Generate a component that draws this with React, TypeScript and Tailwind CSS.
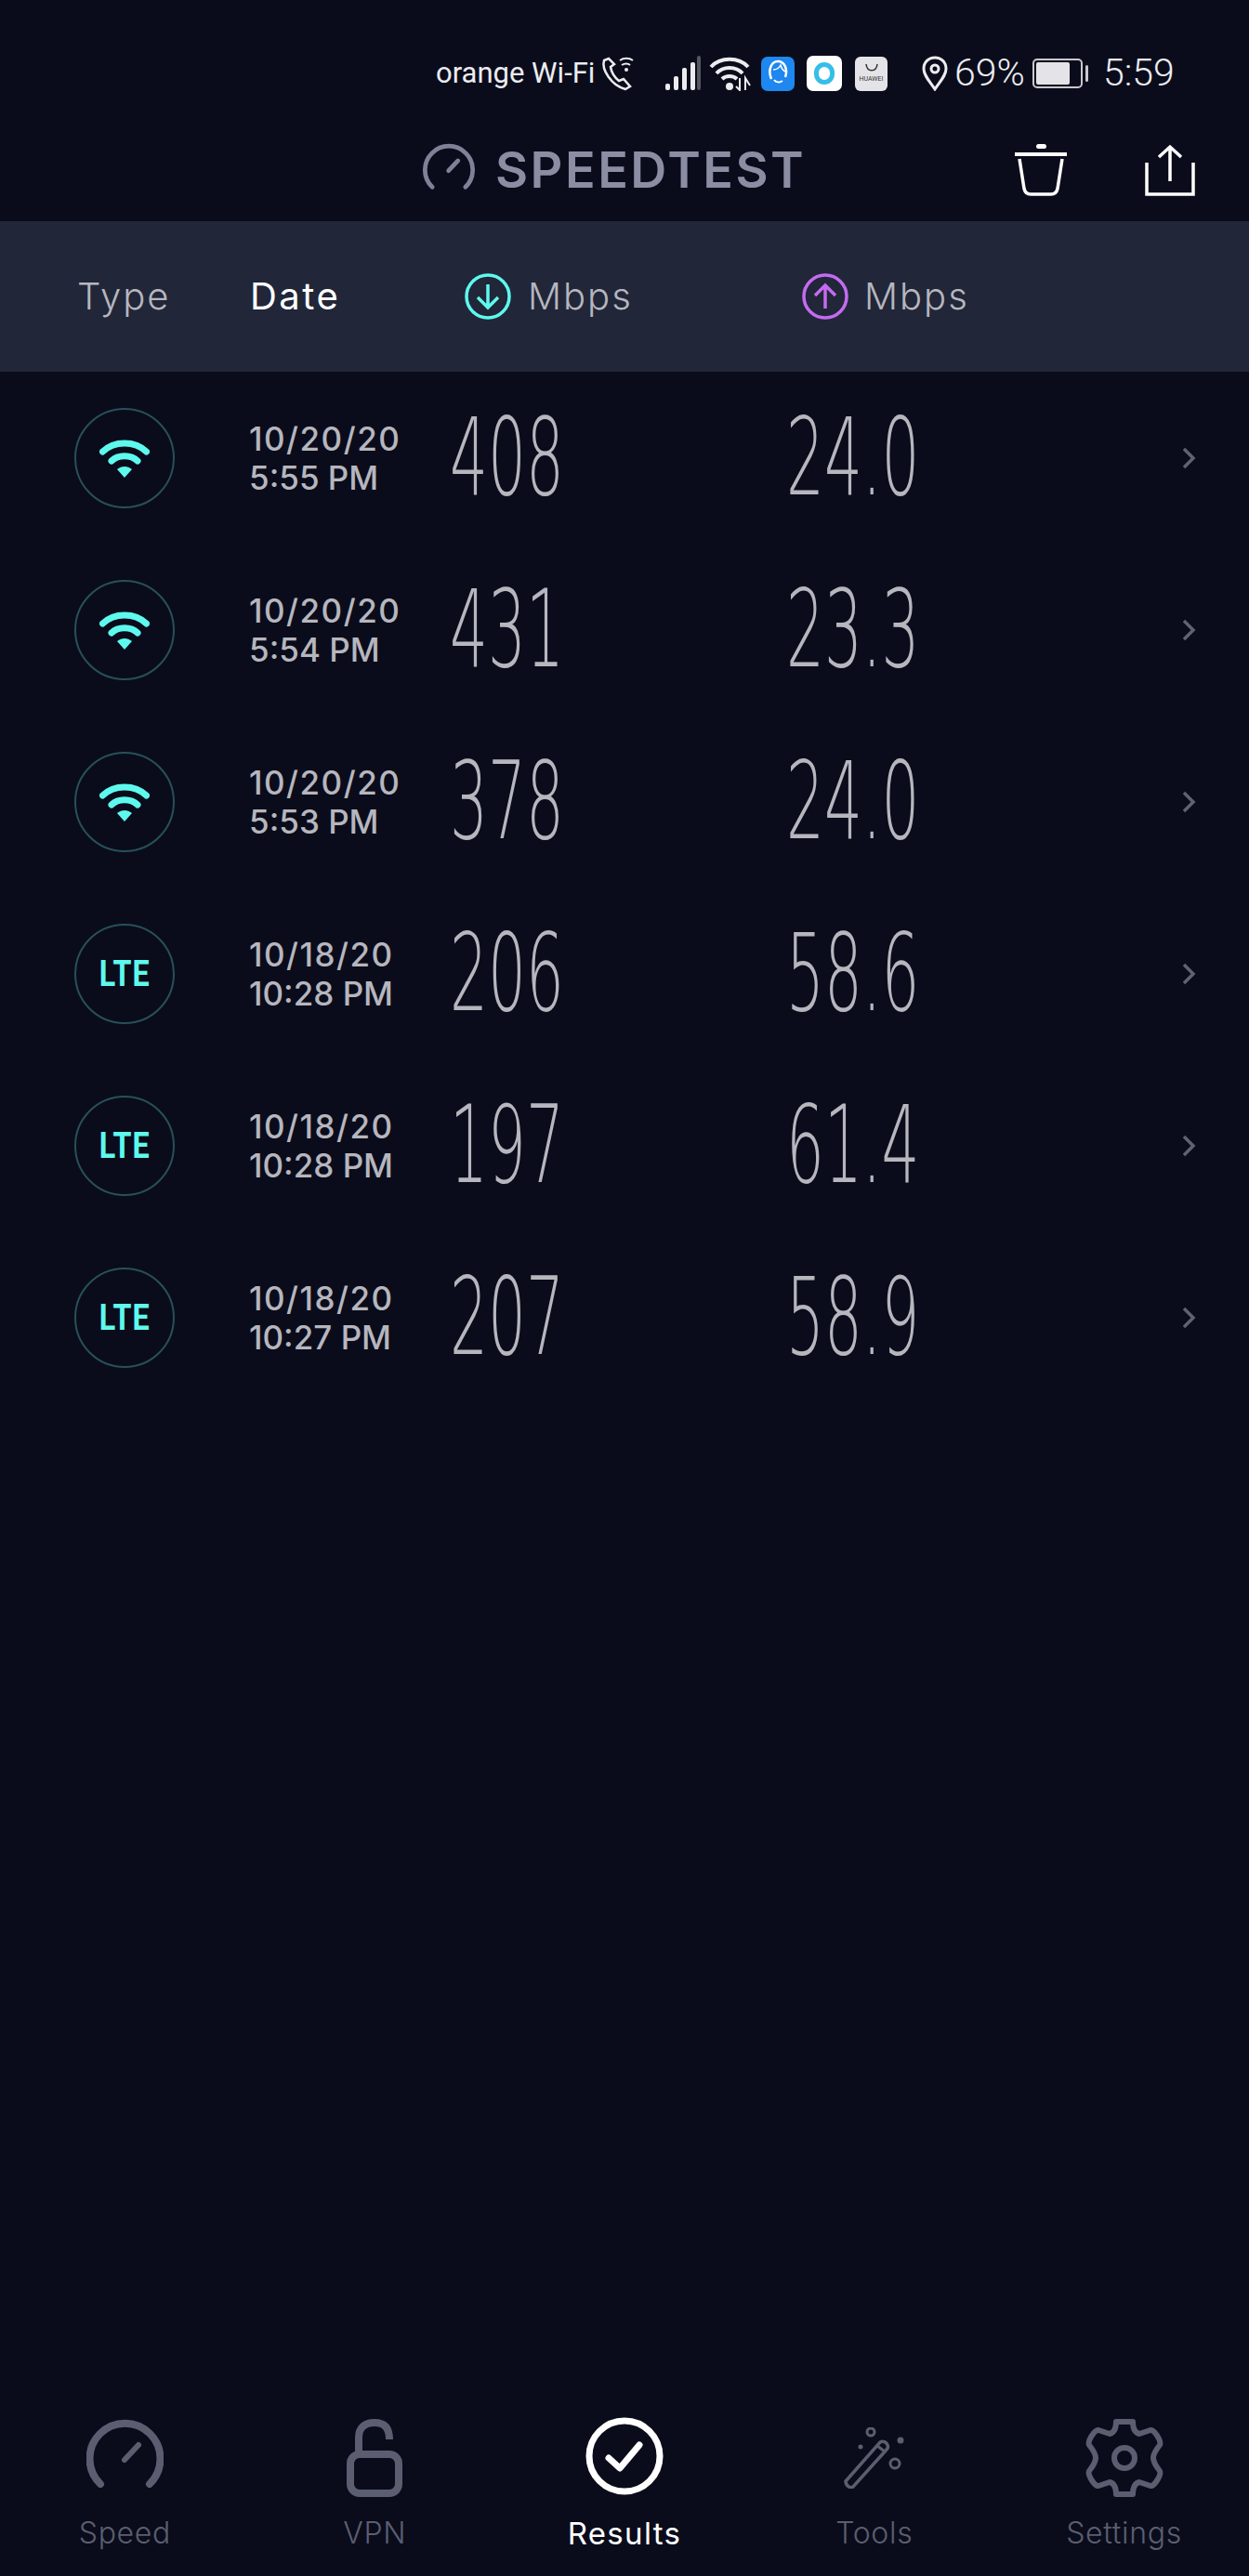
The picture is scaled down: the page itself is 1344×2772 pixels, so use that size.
import React from "react";

const rows = [
  { type: "wifi", date: "10/20/20", time: "5:55 PM", down: "408", up: "24.0" },
  { type: "wifi", date: "10/20/20", time: "5:54 PM", down: "431", up: "23.3" },
  { type: "wifi", date: "10/20/20", time: "5:53 PM", down: "378", up: "24.0" },
  { type: "lte", date: "10/18/20", time: "10:28 PM", down: "206", up: "58.6" },
  { type: "lte", date: "10/18/20", time: "10:28 PM", down: "197", up: "61.4" },
  { type: "lte", date: "10/18/20", time: "10:27 PM", down: "207", up: "58.9" },
];

const WifiIcon = () => (
  <svg width="54" height="42" viewBox="0 0 54 42" fill="none">
    <path d="M3.5 14 C16 2 38 2 50.5 14" stroke="#5ef9ee" strokeWidth="7" strokeLinecap="round" />
    <path d="M13 24 C20 17 34 17 41 24" stroke="#5ef9ee" strokeWidth="7" strokeLinecap="round" />
    <path d="M19 33 C24 29 30 29 35 33 L27 42 Z" fill="#5ef9ee" />
  </svg>
);

const Gauge = ({ color, w, h, sw, needle, className }: { color: string; w: number; h: number; sw: number; needle: number; className?: string }) => (
  <svg width={w} height={h} viewBox="0 0 83 74" fill="none" className={className}>
    <path d="M15 70 A38 38 0 1 1 68 70" stroke={color} strokeWidth={sw} strokeLinecap="round" />
    <path d="M41 44 L56 28" stroke={color} strokeWidth={needle} strokeLinecap="round" />
  </svg>
);

const Row = ({ r }: { r: (typeof rows)[number] }) => (
  <div className="flex h-[185px] items-center pl-[80px]">
    <div className="flex h-[108px] w-[108px] shrink-0 items-center justify-center rounded-full border-2 border-[#28505a]">
      {r.type === "wifi" ? (
        <WifiIcon />
      ) : (
        <span className="inline-block origin-center scale-x-[0.85] font-['Roboto'] text-[38px] font-bold leading-none tracking-[1px] text-[#5ef9ee]">
          LTE
        </span>
      )}
    </div>
    <div className="ml-[80px] w-[219px] shrink-0 text-[35px] font-medium leading-[42px] text-[#b6b6be]">
      <div className="tracking-[1.5px]">{r.date}</div>
      <div>{r.time}</div>
    </div>
    <div className="w-[362px] shrink-0">
      <span className="-ml-[3px] inline-block origin-left scale-x-[0.56] font-['DejaVu_Sans'] text-[115px] font-extralight leading-none text-[#b6b6be]">
        {r.down}
      </span>
    </div>
    <div className="w-[300px] shrink-0">
      <span className="-ml-[3px] inline-block origin-left scale-x-[0.56] font-['DejaVu_Sans'] text-[115px] font-extralight leading-none text-[#b6b6be]">
        {r.up}
      </span>
    </div>
    <svg width="16" height="30" viewBox="0 0 16 30" fill="none" className="ml-[122px]">
      <path d="M3 5 L13 15 L3 25" stroke="#5f6272" strokeWidth="3.5" />
    </svg>
  </div>
);

const NavItem = ({ label, active, children }: { label: string; active?: boolean; children: React.ReactNode }) => (
  <div className="flex flex-col items-center">
    <div className="flex h-[90px] items-center justify-center">{children}</div>
    <span className={`mt-[16px] leading-[40px] ${active ? "text-[33px] tracking-[1.3px] text-white" : "text-[32px] font-light tracking-[0.7px] text-[#5b5e70]"}`}>{label}</span>
  </div>
);

export default function App() {
  return (
    <div className="flex h-[2772px] w-[1344px] flex-col overflow-hidden bg-[#0a0c1b] font-['Inter'] sans-serif">
      {/* status bar */}
      <div className="flex h-[130px] items-start pl-[469px] pt-[57px] text-[#ececf0]">
        <div className="flex h-[44px] items-center">
          <span className="w-[172px] font-['Roboto'] text-[31px] whitespace-nowrap">orange Wi-Fi</span>
          <svg width="40" height="40" viewBox="0 0 40 40" fill="none" className="ml-[4px]">
            <path d="M5 6 C2 16 13 33 28 37 L33 34 L26 26 L21 28 C16 24 13 19 12 13 L16 10 L10 4 Z" stroke="#ececf0" strokeWidth="2.5" />
            <path d="M22 6 C26 3 32 3 36 6 M24 11 C27 9 31 9 33 11" stroke="#ececf0" strokeWidth="2" />
            <circle cx="29" cy="16" r="2" fill="#ececf0" />
          </svg>
          <svg width="40" height="38" viewBox="0 0 40 38" className="ml-[30px]">
            <rect x="1" y="30" width="5" height="7" rx="2" fill="#ececf0" />
            <rect x="10" y="22" width="5" height="15" rx="2" fill="#ececf0" />
            <rect x="19" y="13" width="5" height="24" rx="2" fill="#ececf0" />
            <rect x="28" y="7" width="5" height="30" rx="2" fill="#ececf0" />
            <rect x="35" y="0" width="4" height="37" rx="2" fill="#55565f" />
          </svg>
          <svg width="46" height="38" viewBox="0 0 46 38" fill="none" className="ml-[8px]">
            <path d="M2 12 C12 1 32 1 42 12 M8 19 C15 11 29 11 36 19 M14 25 C18 21 26 21 30 25" stroke="#ececf0" strokeWidth="4" />
            <circle cx="22" cy="33" r="4" fill="#ececf0" />
            <path d="M33 24 V37 L29 33 M39 37 V24 L44 32" stroke="#ececf0" strokeWidth="2" />
          </svg>
          <div className="ml-[10px] flex h-[37px] w-[36px] items-center justify-center rounded-[7px] bg-[#1e87f0]">
            <svg width="28" height="32" viewBox="0 0 28 32" fill="none">
              <path d="M7 22 C3 12 7 3 14 3 C21 3 25 11 22 20" stroke="#fff" strokeWidth="2.5" />
              <path d="M9 12 C13 12 16 9 17 7 C18 11 20 13 22 14" stroke="#fff" strokeWidth="1.5" />
              <path d="M10 23 C12 26 16 26 19 24" stroke="#fff" strokeWidth="2" />
            </svg>
          </div>
          <div className="ml-[13px] flex h-[38px] w-[38px] items-center justify-center rounded-[7px] bg-white">
            <div className="h-[24px] w-[22px] rounded-full border-[5px] border-[#35bfe8]" />
          </div>
          <div className="ml-[14px] flex h-[37px] w-[35px] flex-col items-center justify-center rounded-[6px] bg-[#e4e4e8]">
            <svg width="16" height="10" viewBox="0 0 16 10" fill="none">
              <path d="M2 0 C3 9 13 9 14 0" stroke="#333" strokeWidth="1.5" />
            </svg>
            <span className="mt-[2px] font-['Roboto'] text-[7px] leading-[8px] text-[#333]">HUAWEI</span>
          </div>
          <svg width="30" height="38" viewBox="0 0 30 38" fill="none" className="ml-[36px]">
            <path d="M15 36 C9 27 3 21 3 14 C3 7 8 2 15 2 C22 2 27 7 27 14 C27 21 21 27 15 36 Z" stroke="#ececf0" strokeWidth="3" />
            <circle cx="15" cy="14" r="4" stroke="#ececf0" strokeWidth="3" />
          </svg>
          <span className="ml-[6px] w-[78px] font-['Roboto'] text-[41px] font-light">69%</span>
          <div className="ml-[6px] flex items-center">
            <div className="flex h-[32px] w-[54px] items-center rounded-[5px] border-2 border-[#c8c8ce] p-[2px]">
              <div className="h-full w-[36px] rounded-[2px] bg-[#e4e4e8]" />
            </div>
            <div className="ml-[3px] h-[18px] w-[3px] rounded-full bg-[#c8c8ce]" />
          </div>
          <span className="ml-[16px] font-['Roboto'] text-[41px] font-light">5:59</span>
        </div>
      </div>

      {/* title bar */}
      <div className="mb-[2px] flex h-[106px] items-center pl-[454px]">
        <Gauge color="#7f8196" w={58} h={50} sw={7} needle={7} className="mb-[9px]" />
        <span className="ml-[21px] w-[333px] whitespace-nowrap text-[54px] font-semibold leading-none tracking-[2.5px] text-[#8b8da3]">SPEEDTEST</span>
        <svg width="56" height="56" viewBox="0 0 56 56" fill="none" className="ml-[226px]">
          <path d="M0 11 H56" stroke="#fff" strokeWidth="4" />
          <rect x="23" y="0" width="11" height="5" rx="2.5" fill="#fff" />
          <path d="M5 16 L10 48 C11 52 13 54 17 54 H39 C43 54 45 52 46 48 L51 16" stroke="#fff" strokeWidth="3.5" />
        </svg>
        <svg width="54" height="56" viewBox="0 0 54 56" fill="none" className="ml-[84px]">
          <path d="M27 40 V3 M15 14 L27 3 L39 14" stroke="#fff" strokeWidth="3.5" />
          <path d="M2 20 V54 H52 V20" stroke="#fff" strokeWidth="3.5" />
        </svg>
      </div>

      {/* column headers */}
      <div className="flex h-[162px] items-center bg-[#212639] pl-[83px] text-[40px] font-light tracking-[2px]">
        <span className="w-[186px] text-[#b6b6be]">Type</span>
        <span className="w-[231px] font-normal tracking-[2.5px] text-white">Date</span>
        <svg width="50" height="50" viewBox="0 0 50 50" fill="none">
          <circle cx="25" cy="25" r="23" stroke="#5ef9ee" strokeWidth="3.5" />
          <path d="M25 12 V37 M14 26 L25 37 L36 26" stroke="#5ef9ee" strokeWidth="3.5" />
        </svg>
        <span className="ml-[18px] w-[295px] text-[#b6b6be]">Mbps</span>
        <svg width="50" height="50" viewBox="0 0 50 50" fill="none">
          <circle cx="25" cy="25" r="23" stroke="#c56bf0" strokeWidth="3.5" />
          <path d="M25 38 V13 M14 24 L25 13 L36 24" stroke="#c56bf0" strokeWidth="3.5" />
        </svg>
        <span className="ml-[17px] text-[#b6b6be]">Mbps</span>
      </div>

      {/* results */}
      <div className="flex-1">
        {rows.map((r, i) => (
          <Row key={i} r={r} />
        ))}
      </div>

      {/* bottom nav */}
      <div className="grid h-[172px] grid-cols-5">
        <NavItem label="Speed">
          <Gauge color="#5b5e70" w={83} h={74} sw={8} needle={6} className="mb-[10px]" />
        </NavItem>
        <NavItem label="VPN">
          <svg width="60" height="84" viewBox="0 0 60 84" fill="none">
            <path d="M13 35 V20 C13 10 19 4 30 4 C41 4 46 10 46 22" stroke="#5b5e70" strokeWidth="8" />
            <rect x="4" y="38" width="52" height="42" rx="10" stroke="#5b5e70" strokeWidth="8" />
          </svg>
        </NavItem>
        <NavItem label="Results" active>
          <svg width="84" height="84" viewBox="0 0 84 84" fill="none" className="mb-[4px]">
            <circle cx="42" cy="42" r="38" stroke="#fff" strokeWidth="7" />
            <path d="M25 44 L37 55 L58 30" stroke="#fff" strokeWidth="7" strokeLinecap="round" strokeLinejoin="round" />
          </svg>
        </NavItem>
        <NavItem label="Tools">
          <svg width="68" height="66" viewBox="0 0 68 66" fill="none">
            <path d="M3 58 L40 16 C43 14 47 16 48 19 C49 21 48 23 47 24 L11 64 C8 66 3 63 3 58 Z" stroke="#5b5e70" strokeWidth="3.5" />
            <path d="M37 20 L45 26" stroke="#5b5e70" strokeWidth="3" />
            <circle cx="30" cy="5" r="4" stroke="#5b5e70" strokeWidth="3" />
            <circle cx="56" cy="39" r="5" stroke="#5b5e70" strokeWidth="3" />
            <circle cx="62" cy="14" r="3.5" fill="#5b5e70" />
            <circle cx="19" cy="21" r="2.5" fill="#5b5e70" />
          </svg>
        </NavItem>
        <NavItem label="Settings">
          <svg width="84" height="84" viewBox="0 0 84 84" fill="none">
            <path d="M33 3 H51 C51 12 54 15 58 16 L70 12 C74 11 82 24 80 28 C76 33 73 37 73 42 C73 47 76 51 80 56 C82 60 74 73 70 72 L58 68 C54 69 51 72 51 81 H33 C33 72 30 69 26 68 L14 72 C10 73 2 60 4 56 C8 51 11 47 11 42 C11 37 8 33 4 28 C2 24 10 11 14 12 L26 16 C30 15 33 12 33 3 Z" stroke="#5b5e70" strokeWidth="6" strokeLinejoin="round" />
            <circle cx="42" cy="42" r="11" stroke="#5b5e70" strokeWidth="6" />
          </svg>
        </NavItem>
      </div>
    </div>
  );
}
